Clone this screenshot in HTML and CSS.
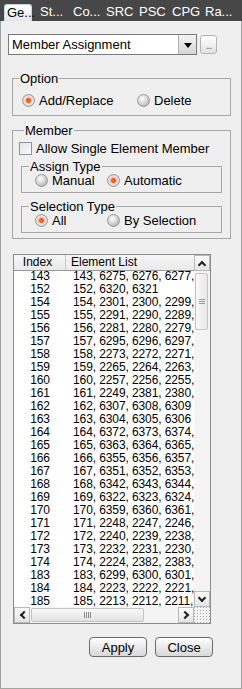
FILE: index.html
```html
<!DOCTYPE html>
<html lang="en">
<head>
    <meta charset="UTF-8">
    <title>Member Assignment</title>
    <link rel="stylesheet" href="styles.css">
</head>
<body>
    <div class="tabs">
        <div class="tab active">Ge...</div>
        <div class="tab">St...</div>
        <div class="tab">Co...</div>
        <div class="tab">SRC</div>
        <div class="tab">PSC</div>
        <div class="tab">CPG</div>
        <div class="tab">Ra...</div>
    </div>

    <div class="panel">
        <div class="combo-row">
            <div class="combo">
                <span class="combo-text">Member Assignment</span>
                <span class="combo-btn"><span class="tri"></span></span>
            </div>
            <div class="dots-btn">...</div>
        </div>

        <fieldset class="group option">
            <legend>Option</legend>
            <div class="radio-row">
                <label class="radio checked">Add/Replace</label>
                <label class="radio">Delete</label>
            </div>
        </fieldset>

        <fieldset class="group member">
            <legend>Member</legend>
            <label class="check">Allow Single Element Member</label>

            <fieldset class="group sub">
                <legend>Assign Type</legend>
                <div class="radio-row">
                    <label class="radio">Manual</label>
                    <label class="radio checked">Automatic</label>
                </div>
            </fieldset>

            <fieldset class="group sub">
                <legend>Selection Type</legend>
                <div class="radio-row">
                    <label class="radio checked">All</label>
                    <label class="radio">By Selection</label>
                </div>
            </fieldset>
        </fieldset>

        <div class="list">
            <div class="list-main">
                <div class="list-head">
                    <div class="col-idx">Index</div>
                    <div class="col-el">Element List</div>
                </div>
                <div class="list-body" id="rows"></div>
            </div>
            <div class="vscroll">
                <div class="sb-btn"><span class="chev up"></span></div>
                <div class="vtrack">
                    <div class="vthumb"><span class="grip-h"></span></div>
                </div>
                <div class="sb-btn"><span class="chev down"></span></div>
            </div>
            <div class="hscroll">
                <div class="sb-btn"><span class="chev left"></span></div>
                <div class="htrack">
                    <div class="hthumb"><span class="grip-v"></span></div>
                </div>
                <div class="sb-btn"><span class="chev right"></span></div>
            </div>
            <div class="corner"></div>
        </div>

        <div class="actions">
            <button class="btn">Apply</button>
            <button class="btn">Close</button>
        </div>
    </div>

    <script>
        const data = [
            [143, '6275, 6276, 6277,'],
            [152, '6320, 6321'],
            [154, '2301, 2300, 2299,'],
            [155, '2291, 2290, 2289,'],
            [156, '2281, 2280, 2279,'],
            [157, '6295, 6296, 6297,'],
            [158, '2273, 2272, 2271,'],
            [159, '2265, 2264, 2263,'],
            [160, '2257, 2256, 2255,'],
            [161, '2249, 2381, 2380,'],
            [162, '6307, 6308, 6309'],
            [163, '6304, 6305, 6306'],
            [164, '6372, 6373, 6374,'],
            [165, '6363, 6364, 6365,'],
            [166, '6355, 6356, 6357,'],
            [167, '6351, 6352, 6353,'],
            [168, '6342, 6343, 6344,'],
            [169, '6322, 6323, 6324,'],
            [170, '6359, 6360, 6361,'],
            [171, '2248, 2247, 2246,'],
            [172, '2240, 2239, 2238,'],
            [173, '2232, 2231, 2230,'],
            [174, '2224, 2382, 2383,'],
            [183, '6299, 6300, 6301,'],
            [184, '2223, 2222, 2221,'],
            [185, '2213, 2212, 2211,']
        ];

        const rows = document.getElementById('rows');
        data.forEach(function(d) {
            const row = document.createElement('div');
            row.className = 'row';
            row.innerHTML = '<div class="col-idx">' + d[0] + '</div>' +
                '<div class="col-el">' + d[0] + ', ' + d[1] + '</div>';
            rows.appendChild(row);
        });
    </script>
</body>
</html>
```

FILE: styles.css
```css
body {
    margin: 0;
    width: 242px;
    height: 689px;
    font-family: 'Liberation Sans', Arial, sans-serif;
    font-size: 13px;
    color: #000;
    background: #efefef;
    overflow: hidden;
}

/* tab strip */
.tabs {
    display: flex;
    height: 21px;
    padding-left: 4px;
    background: #474747;
    box-sizing: border-box;
    align-items: flex-end;
}

.tab {
    width: 33px;
    height: 17px;
    padding-left: 3px;
    box-sizing: border-box;
    color: #fff;
    line-height: 15px;
    white-space: nowrap;
}

.tab.active {
    width: 28px;
    margin-right: 5px;
    padding-left: 2px;
    color: #000;
    background: linear-gradient(#ffffff, #e4e6e6);
    border: 1px solid #b8dce4;
    border-bottom: none;
    border-radius: 3px 3px 0 0;
}

/* panel */
.panel {
    height: 668px;
    box-sizing: border-box;
    border: 1px solid #a3a3a3;
    border-top: none;
    padding: 13px 7px 0 7px;
    background: #efefef;
}

.combo-row {
    display: flex;
    align-items: center;
    height: 21px;
}

.combo {
    display: flex;
    width: 189px;
    height: 21px;
    box-sizing: border-box;
    border: 1px solid #7a7a7a;
    background: #fff;
}

.combo-text {
    flex: 1;
    padding-left: 3px;
    line-height: 19px;
}

.combo-btn {
    width: 17px;
    border-left: 1px solid #b0b0b0;
    background: linear-gradient(#f4f4f4, #d6d6d6);
    display: flex;
    align-items: center;
    justify-content: center;
}

.tri {
    width: 0;
    height: 0;
    border-left: 4px solid transparent;
    border-right: 4px solid transparent;
    border-top: 5px solid #000;
    margin-top: 1px;
}

.dots-btn {
    width: 17px;
    height: 19px;
    margin-left: 3px;
    box-sizing: border-box;
    border: 1px solid #b4b4b4;
    border-radius: 3px;
    background: linear-gradient(#ffffff, #e2e2e2);
    color: #4d6fb0;
    font-size: 10px;
    line-height: 20px;
    text-align: center;
    letter-spacing: -1px;
}

/* group boxes */
.group {
    margin: 0;
    border: 1px solid #a6a6a6;
    padding: 0;
    min-width: 0;
}

.group legend {
    padding: 0 1px;
    margin-left: 6px;
    line-height: 15px;
}

.option {
    margin: 16px 3px 0 4px;
    height: 45px;
    box-sizing: border-box;
}

.member {
    margin: 7px 3px 0 4px;
    padding: 0 8px 5px 5px;
}

.sub {
    height: 34px;
    box-sizing: border-box;
    margin-left: 3px;
}

.sub + .sub {
    margin-top: 6px;
}

.sub legend {
    margin-left: 7px;
}

.radio-row {
    display: flex;
    height: 16px;
    align-items: center;
    padding-left: 9px;
}

.option .radio-row {
    margin-top: 6px;
}

.sub .radio-row {
    height: 13px;
    padding-left: 13px;
}

.radio {
    display: flex;
    flex: none;
    align-items: center;
    width: 72px;
    white-space: nowrap;
}

.option .radio:first-child {
    width: 115px;
}

.radio::before {
    content: '';
    width: 11px;
    height: 11px;
    margin-right: 4px;
    border-radius: 50%;
    border: 1px solid #9a9a9a;
    background: radial-gradient(circle at 40% 35%, #ffffff 0, #d8d8d8 45%, #9e9e9e 100%);
    flex: none;
}

.radio.checked::before {
    background: radial-gradient(circle at 50% 50%, #ff6a1a 0, #f2551c 25%, #f7b39a 36%, #e6e6e6 55%, #b0b0b0 100%);
}

.check {
    display: flex;
    align-items: center;
    margin: 3px 0 3px 1px;
    height: 15px;
    white-space: nowrap;
}

.check::before {
    content: '';
    width: 11px;
    height: 11px;
    margin-right: 4px;
    border: 1px solid #8893a4;
    background: linear-gradient(135deg, #dfe3ea, #fbfbfc);
    flex: none;
}

/* list */
.list {
    display: grid;
    grid-template-columns: 1fr 16px;
    grid-template-rows: 352px 16px;
    width: 198px;
    height: 370px;
    box-sizing: border-box;
    margin: 15px 0 0 5px;
    border: 1px solid #8c8c8c;
    background: #fff;
    overflow: hidden;
}

.list-main {
    overflow: hidden;
    font-size: 12px;
}

.list-head {
    display: flex;
    height: 16px;
    line-height: 15px;
    background: linear-gradient(#f7f7f7, #e9e9e9);
    border-bottom: 1px solid #9a9a9a;
    box-sizing: border-box;
}

.list-head .col-idx {
    border-right: 1px solid #c8c8c8;
    text-align: center;
    padding-right: 4px;
}

.list-head .col-el {
    padding-left: 5px;
}

.row {
    display: flex;
    height: 13px;
    line-height: 11px;
    letter-spacing: -0.1px;
}

.col-idx {
    width: 52px;
    flex: none;
    text-align: center;
    box-sizing: border-box;
}

.col-el {
    padding-left: 6px;
    white-space: nowrap;
}

.row .col-el {
    padding-left: 7px;
}

.vscroll {
    display: flex;
    flex-direction: column;
    background: #f4f4f4;
}

.hscroll {
    display: flex;
    background: #f4f4f4;
}

.sb-btn {
    width: 16px;
    height: 16px;
    flex: none;
    box-sizing: border-box;
    border: 1px solid #b9b9b9;
    background: linear-gradient(#fdfdfd, #e4e4e4);
    display: flex;
    align-items: center;
    justify-content: center;
}

.chev {
    width: 4px;
    height: 4px;
    border-left: 2px solid #222;
    border-top: 2px solid #222;
}

.chev.up {
    transform: rotate(45deg);
    margin-top: 3px;
}

.chev.down {
    transform: rotate(225deg);
    margin-bottom: 3px;
}

.chev.left {
    transform: rotate(-45deg);
    margin-left: 3px;
}

.chev.right {
    transform: rotate(135deg);
    margin-right: 3px;
}

.vtrack {
    flex: 1;
    padding-top: 2px;
}

.vthumb {
    width: 13px;
    height: 57px;
    margin-left: 1px;
    box-sizing: border-box;
    border: 1px solid #c4c4c4;
    border-radius: 2px;
    background: linear-gradient(90deg, #f9f9f9, #e8e8e8);
    display: flex;
    align-items: center;
    justify-content: center;
}

.grip-h {
    width: 6px;
    height: 5px;
    background: repeating-linear-gradient(#9a9a9a 0, #9a9a9a 1px, transparent 1px, transparent 2px);
}

.htrack {
    flex: 1;
    padding-left: 1px;
}

.hthumb {
    width: 113px;
    height: 14px;
    margin-top: 1px;
    box-sizing: border-box;
    border: 1px solid #c4c4c4;
    border-radius: 2px;
    background: linear-gradient(#f9f9f9, #e2e2e2);
    display: flex;
    align-items: center;
    justify-content: center;
}

.grip-v {
    width: 7px;
    height: 6px;
    background: repeating-linear-gradient(90deg, #8a8a8a 0, #8a8a8a 1px, transparent 1px, transparent 2px);
}

.corner {
    background: #f4f4f4 radial-gradient(circle, #a8a8a8 0.8px, transparent 1px) 2px 2px / 3px 3px;
}

/* bottom buttons */
.actions {
    display: flex;
    justify-content: flex-end;
    gap: 8px;
    margin: 13px 21px 0 0;
}

.btn {
    width: 58px;
    height: 20px;
    padding: 0;
    border: 1px solid #6a6a6a;
    border-radius: 4px;
    background: linear-gradient(#ffffff, #e6e6e6 60%, #d9d9d9);
    font-family: 'Liberation Sans', Arial, sans-serif;
    font-size: 13px;
    color: #000;
}
```
